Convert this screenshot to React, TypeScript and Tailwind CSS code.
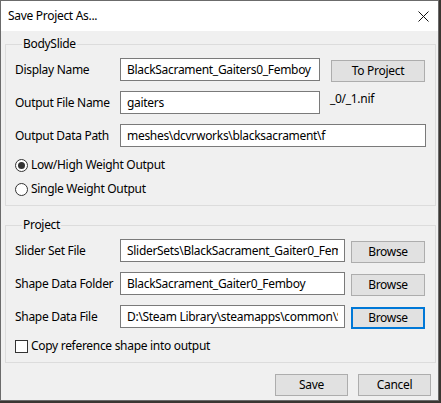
const font = { fontFamily: '"Segoe UI", "Noto Sans", "Open Sans", sans-serif' };

const Field = ({ value, width }: { value: string; width?: string }) => (
  <input
    readOnly
    value={value}
    className={`h-[23px] border border-[#7a7a7a] bg-white px-[6px] text-[12px] tracking-[-0.3px] text-black outline-none ${width ?? 'flex-1 min-w-0'}`}
  />
);

const Btn = ({ label, focused, width }: { label: string; focused?: boolean; width: string }) => (
  <button
    className={`h-[22px] ${width} shrink-0 bg-[#e1e1e1] text-[12px] tracking-[-0.3px] text-black ${
      focused ? 'border-2 border-[#0078d7]' : 'border border-[#adadad]'
    }`}
  >
    {label}
  </button>
);

const Group = ({ title, children, className }: { title: string; children: React.ReactNode; className?: string }) => (
  <fieldset className={`mx-[4px] border border-[#dcdcdc] px-[9px] ${className ?? ''}`}>
    <legend className="ml-[7px] px-[1px] text-[12px] leading-[16px] text-black">{title}</legend>
    {children}
  </fieldset>
);

const Row = ({ label, children }: { label: string; children: React.ReactNode }) => (
  <div className="flex items-center h-[23px]">
    <span className="w-[105px] shrink-0 text-[12px] text-black">{label}</span>
    {children}
  </div>
);

export default function App() {
  return (
    <div className="w-[441px] h-[403px] bg-[#3a3632] overflow-hidden tracking-[-0.3px]" style={font}>
      <div className="w-[439px] h-[401px] border border-[#6b6b6b] bg-[#f0f0f0] flex flex-col">
        {/* title bar */}
        <div className="h-[30px] bg-white flex items-center justify-between pl-[7px] pr-[8px] shrink-0">
          <span className="text-[12px] text-black">Save Project As...</span>
          <svg width="11" height="11" viewBox="0 0 11 11" className="mr-[1px]">
            <path d="M0.5 0.5 L10.5 10.5 M10.5 0.5 L0.5 10.5" stroke="#111" strokeWidth="1" />
          </svg>
        </div>

        <Group title="BodySlide" className="mt-[5px] pt-[6px] pb-[8px]">
          <div className="flex flex-col gap-[10px]">
            <Row label="Display Name">
              <Field value="BlackSacrament_Gaiters0_Femboy" width="w-[200px]" />
              <div className="ml-[11px] mr-[1px]">
                <Btn label="To Project" width="w-[94px]" />
              </div>
            </Row>
            <Row label="Output File Name">
              <Field value="gaiters" width="w-[200px]" />
              <span className="ml-[10px] self-start text-[12px] leading-[16px] text-black">_0/_1.nif</span>
            </Row>
            <Row label="Output Data Path">
              <Field value="meshes\dcvrworks\blacksacrament\f" />
            </Row>
          </div>
          <div className="mt-[10px] flex flex-col gap-[8px]">
            <label className="flex items-center h-[16px] gap-[3px] text-[12px] text-black">
              <span className="w-[13px] h-[13px] rounded-full border border-[#333] bg-white flex items-center justify-center">
                <span className="w-[7px] h-[7px] rounded-full bg-[#333]" />
              </span>
              Low/High Weight Output
            </label>
            <label className="flex items-center h-[16px] gap-[3px] text-[12px] text-black">
              <span className="w-[13px] h-[13px] rounded-full border border-[#333] bg-white" />
              Single Weight Output
            </label>
          </div>
        </Group>

        <Group title="Project" className="mt-[11px] pt-[6px] pb-[8px]">
          <div className="flex flex-col gap-[10px]">
            <Row label="Slider Set File">
              <Field value="SliderSets\BlackSacrament_Gaiter0_Femboy.osp" width="w-[225px]" />
              <div className="ml-[6px] mr-[1px]">
                <Btn label="Browse" width="w-[74px]" />
              </div>
            </Row>
            <Row label="Shape Data Folder">
              <Field value="BlackSacrament_Gaiter0_Femboy" width="w-[225px]" />
              <div className="ml-[6px] mr-[1px]">
                <Btn label="Browse" width="w-[74px]" />
              </div>
            </Row>
            <Row label="Shape Data File">
              <Field value="D:\Steam Library\steamapps\common\Skyrim" width="w-[225px]" />
              <div className="ml-[6px] mr-[1px]">
                <Btn label="Browse" width="w-[74px]" focused />
              </div>
            </Row>
          </div>
          <label className="mt-[10px] flex items-center h-[16px] gap-[3px] text-[12px] text-black">
            <span className="w-[13px] h-[13px] border border-[#333] bg-white" />
            Copy reference shape into output
          </label>
        </Group>

        <div className="mt-[11px] flex justify-end gap-[10px] pr-[7px]">
          <Btn label="Save" width="w-[73px]" />
          <Btn label="Cancel" width="w-[73px]" />
        </div>
      </div>
    </div>
  );
}
